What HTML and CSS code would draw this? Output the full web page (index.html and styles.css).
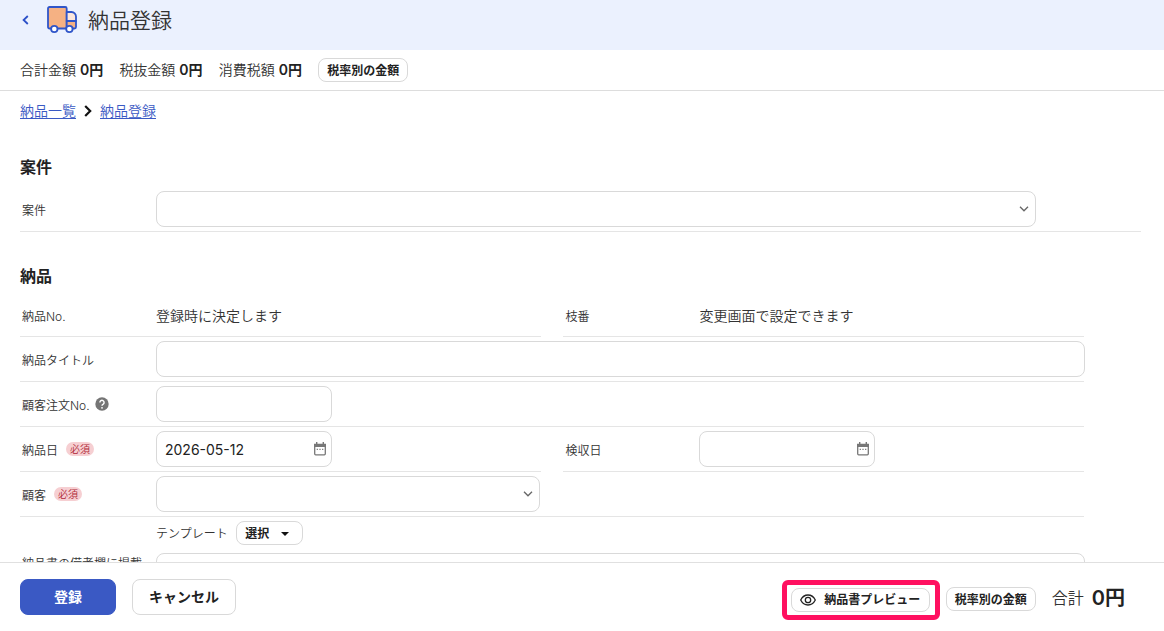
FILE: index.html
```html
<!DOCTYPE html>
<html lang="ja">
<head>
  <meta charset="UTF-8">
  <meta name="viewport" content="width=device-width, initial-scale=1.0">
  <title>納品登録</title>
  <link rel="stylesheet" href="styles.css">
</head>
<body>
  <header class="page-header">
    <a class="back" href="#" aria-label="戻る">
      <svg width="8" height="10" viewBox="0 0 8 10" fill="none" stroke="#2b50c8" stroke-width="1.8"><path d="M6.8 1 2.600 5l4.200 4"/></svg>
    </a>
    <svg class="truck" width="30" height="28" viewBox="0 0 30 28" fill="none" stroke="#2f55c9" stroke-width="1.800" stroke-linejoin="round">
      <path d="M1 2.500A1.500 1.500 0 0 1 2.500 1h15.700a1.500 1.500 0 0 1 1.500 1.500V22.500H2.500A1.500 1.500 0 0 1 1 21z" fill="#f5b183"/>
      <path d="M19.700 6h4.800a4.500 4.500 0 0 1 4.500 4.500V15h-9.300z" fill="#fbe6dc"/>
      <path d="M19.700 15H29v6a1.500 1.500 0 0 1-1.500 1.500h-7.800z" fill="#f5b183"/>
      <circle cx="7.300" cy="23" r="3.200" fill="#fff"/>
      <circle cx="22.400" cy="23" r="3.200" fill="#fff"/>
    </svg>
    <h1>納品登録</h1>
  </header>

  <!-- 合計欄 -->
  <div class="summary">
    <span>合計金額 <b>0円</b></span>
    <span>税抜金額 <b>0円</b></span>
    <span>消費税額 <b>0円</b></span>
    <button class="btn-small" type="button">税率別の金額</button>
  </div>

  <main class="content">
    <nav class="breadcrumb">
      <a href="#">納品一覧</a>
      <svg width="8" height="12" viewBox="0 0 8 12" fill="none" stroke="#111" stroke-width="2.200"><path d="M1.200 1 6.200 6l-5 5"/></svg>
      <a href="#">納品登録</a>
    </nav>

    <section>
      <h2>案件</h2>
      <div class="row">
        <label class="label" for="project">案件</label>
        <div class="field field-project">
          <input id="project" type="text">
          <svg class="chevron" width="10" height="6" viewBox="0 0 10 6"><path d="M1 .8 5 4.800 9 .8"/></svg>
        </div>
      </div>
    </section>

    <section class="delivery">
      <h2>納品</h2>
      <div class="row-pair">
        <div class="row row-text">
          <span class="label">納品No.</span>
          <span class="value">登録時に決定します</span>
        </div>
        <div class="row row-text">
          <span class="label">枝番</span>
          <span class="value">変更画面で設定できます</span>
        </div>
      </div>
      <div class="row">
        <label class="label" for="title">納品タイトル</label>
        <div class="field field-full"><input id="title" type="text"></div>
      </div>
      <div class="row">
        <label class="label" for="order-no">顧客注文No.
          <svg class="help" width="14" height="14" viewBox="0 0 14 14"><circle cx="7" cy="7" r="6.700" fill="#757575"/><path d="M4.900 5.400a2.100 2.100 0 1 1 3.300 1.700C7.400 7.600 7 7.900 7 8.800" fill="none" stroke="#fff" stroke-width="1.400"/><circle cx="7" cy="10.800" r=".9" fill="#fff"/></svg>
        </label>
        <div class="field field-short"><input id="order-no" type="text"></div>
      </div>
      <div class="row-pair">
        <div class="row">
          <label class="label" for="date">納品日 <span class="required">必須</span></label>
          <div class="field field-short">
            <input id="date" type="text" value="2026-05-12">
            <svg class="calendar" width="12" height="14" viewBox="0 0 12 14"><path class="frame" d="M.7 2.500h10.600v9.300a1 1 0 0 1-1 1H1.700a1 1 0 0 1-1-1z"/><path class="fill" d="M0 2h12v3H0zM2 0h1.400v3H2zM8.600 0H10v3H8.600zM2.700 6.700h1.200v1.200H2.700zM5.400 6.700h1.200v1.200H5.400zM8.100 6.700h1.200v1.200H8.100z"/></svg>
          </div>
        </div>
        <div class="row">
          <label class="label" for="accept-date">検収日</label>
          <div class="field field-short">
            <input id="accept-date" type="text">
            <svg class="calendar" width="12" height="14" viewBox="0 0 12 14"><path class="frame" d="M.7 2.500h10.600v9.300a1 1 0 0 1-1 1H1.700a1 1 0 0 1-1-1z"/><path class="fill" d="M0 2h12v3H0zM2 0h1.400v3H2zM8.600 0H10v3H8.600zM2.700 6.700h1.200v1.200H2.700zM5.400 6.700h1.200v1.200H5.400zM8.100 6.700h1.200v1.200H8.100z"/></svg>
          </div>
        </div>
      </div>
      <div class="row">
        <label class="label" for="customer">顧客 <span class="required">必須</span></label>
        <div class="field field-customer">
          <input id="customer" type="text">
          <svg class="chevron" width="10" height="6" viewBox="0 0 10 6"><path d="M1 .8 5 4.800 9 .8"/></svg>
        </div>
      </div>
      <div class="row row-note">
        <label class="label" for="note">納品書の備考欄に掲載</label>
        <div class="note">
          <div class="template">
            <span>テンプレート</span>
            <button class="btn-small btn-select" type="button">選択
              <svg width="8" height="4" viewBox="0 0 8 4"><path d="M0 0h8L4 4z" fill="#111"/></svg>
            </button>
          </div>
          <textarea id="note"></textarea>
        </div>
      </div>
    </section>
  </main>

  <!-- 操作ボタン -->
  <footer class="actions">
    <button class="btn btn-primary" type="button">登録</button>
    <button class="btn btn-cancel" type="button">キャンセル</button>
    <div class="preview-frame">
      <button class="btn-small btn-preview" type="button">
        <svg width="16" height="12" viewBox="0 0 16 12" fill="none" stroke="#222" stroke-width="1.300"><path d="M.7 6C2.300 2.800 5 1 8 1s5.700 1.800 7.300 5C13.700 9.200 11 11 8 11S2.300 9.200.7 6z"/><circle cx="8" cy="6" r="2.700"/></svg>
        納品書プレビュー
      </button>
    </div>
    <button class="btn-small btn-tax" type="button">税率別の金額</button>
    <div class="total">合計 <b>0円</b></div>
  </footer>
</body>
</html>
```

FILE: styles.css
```css
* {
  box-sizing: border-box;
}

body {
  margin: 0;
  height: 100vh;
  display: flex;
  flex-direction: column;
  overflow: hidden;
  font-family: Inter, "Noto Sans CJK JP", sans-serif;
  font-size: 14px;
  font-weight: 350;
  line-height: 20px;
  color: #333;
  background: #fff;
}

button,
input,
textarea {
  font: inherit;
  color: #222;
  background: #fff;
  border: 1px solid #d9d9d9;
  border-radius: 8px;
}

button {
  display: flex;
  align-items: center;
  justify-content: center;
  padding: 0;
  white-space: nowrap;
  cursor: pointer;
}

svg {
  flex: none;
}

/* ヘッダー */
.page-header {
  display: flex;
  flex: none;
  height: 50px;
  padding: 0 0 10px 21px;
  align-items: center;
  background: #ebf1fe;
}

.back {
  display: flex;
  width: 26px;
}

.page-header h1 {
  margin: 1px 0 0 11px;
  font-size: 21px;
  font-weight: 350;
  line-height: 30px;
}

.summary {
  display: flex;
  flex: none;
  height: 41px;
  padding: 0 20px;
  align-items: center;
  gap: 16.2px;
  border-bottom: 1px solid #ddd;
}

.summary b {
  font-weight: 600;
  color: #222;
}

.btn-small {
  height: 24px;
  padding: 1px 8px 0;
  font-size: 12px;
  font-weight: 600;
}

/* 入力フォーム */
.content {
  flex: 1;
  min-height: 0;
  padding: 10px 23px 0 20px;
  overflow: hidden;
}

.breadcrumb {
  display: flex;
  align-items: center;
  gap: 8px;
  margin-bottom: 34px;
}

.breadcrumb a {
  color: #3a59c4;
  text-underline-offset: 2px;
}

h2 {
  margin: 0;
  height: 32px;
  font-size: 16px;
  font-weight: 600;
  line-height: 24px;
  color: #222;
}

.delivery {
  width: 1064px;
  margin-top: 32px;
}

.row {
  display: flex;
  height: 45px;
  align-items: center;
  border-bottom: 1px solid #e5e5e5;
}

.row-text {
  height: 41px;
}

.row-pair {
  display: grid;
  grid-template-columns: 521px 521px;
  column-gap: 22.400px;
}

.label {
  display: flex;
  flex: none;
  width: 136px;
  padding: 3px 0 0 2px;
  align-items: center;
  font-size: 12px;
}

.row-text .label {
  padding-top: 1px;
}

.help {
  margin: 0 0 4px 5px;
}

.required {
  margin: 0 0 3px 8px;
  padding: 0 4px;
  border-radius: 7px;
  font-size: 10px;
  line-height: 14px;
  color: #b02a37;
  background: #f6cfd2;
}

.field {
  position: relative;
  height: 36px;
}

.field input {
  display: block;
  width: 100%;
  height: 100%;
  padding: 0 8px;
  font-weight: 400;
}

.field-project {
  width: 880px;
}

.field-full {
  width: 929px;
}

.field-full input {
  width: 929px;
}

.field-short {
  width: 176px;
}

.field-customer {
  width: 384px;
}

.chevron,
.calendar {
  position: absolute;
  right: 7px;
  top: 15px;
  fill: none;
  stroke: #666;
  stroke-width: 1.300;
}

.calendar {
  right: 6px;
  top: 11px;
  stroke: #777;
}

.calendar .fill {
  fill: #777;
  stroke: none;
}

.row-note {
  height: 97px;
  align-items: flex-start;
  padding-top: 4px;
}

.row-note .label {
  padding-top: 33px;
}

.note {
  flex: 1;
}

.template {
  display: flex;
  align-items: center;
  gap: 8px;
  margin-bottom: 8px;
  font-size: 12px;
}

.template span {
  padding-top: 2px;
}

.btn-select {
  width: 67px;
  padding: 1px 12px 0 8px;
  gap: 12px;
}

.note textarea {
  display: block;
  width: 929px;
  height: 56px;
  resize: none;
}

/* フッター */
.actions {
  display: flex;
  flex: none;
  height: 69px;
  padding: 0 39px 0 20px;
  align-items: center;
  border-top: 1px solid #e0e0e0;
}

.btn {
  height: 36px;
  font-weight: 600;
}

.btn-primary {
  width: 96px;
  color: #fff;
  background: #3a59c4;
  border-color: #3a59c4;
}

.btn-cancel {
  width: 104px;
  margin-left: 16px;
}

.preview-frame {
  margin: 6px 6px 0 auto;
  padding: 3px 5px 3px 4px;
  border: 5px solid #ff1060;
  border-radius: 6px;
}

.btn-preview {
  width: 139px;
  padding-top: 0;
  gap: 8px;
}

.btn-tax {
  margin-top: 4px;
}

.total {
  display: flex;
  align-items: center;
  gap: 8px;
  margin: 2px 0 0 16px;
  font-size: 16px;
}

.total b {
  font-size: 20px;
  font-weight: 600;
  color: #222;
}
```
